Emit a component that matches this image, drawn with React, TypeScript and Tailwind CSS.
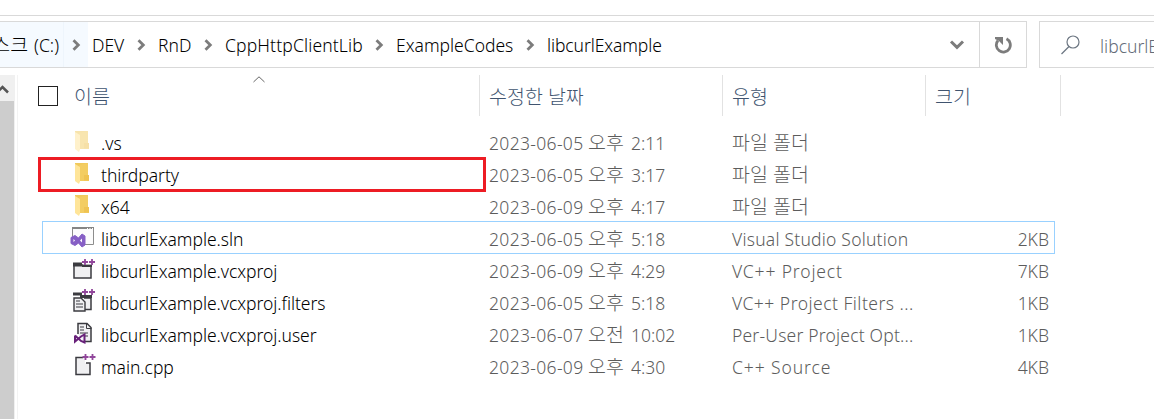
import type { ReactNode } from 'react';

const ink = '#3b3b40';
const plus = '#91479b';

function Plus({ x, y }: { x: number; y: number }) {
  return (
    <path d={`M${x} ${y}h6M${x + 3} ${y - 3}v6M${x + 7} ${y}h6M${x + 10} ${y - 3}v6`} stroke={plus} strokeWidth="1.8" fill="none" />
  );
}

function Icon({ children }: { children: ReactNode }) {
  return (
    <svg width="26" height="26" viewBox="0 0 26 26" className="shrink-0">
      {children}
    </svg>
  );
}

function Folder({ faded = false }: { faded?: boolean }) {
  return (
    <Icon>
      <g opacity={faded ? 0.5 : 1}>
        <path d="M5 2h13v12h1v6H8V2Z" fill="#f3cd62" />
        <path d="M5 2h13l-9 2v16H5Z" fill="#f0c95c" />
        <path d="M5 3l5 3v14.500l-1 2.500l-4-3Z" fill="#ffe599" />
        <path d="M14 14h5v5.500h-5Z" fill="#efc352" />
      </g>
    </Icon>
  );
}

function Solution() {
  return (
    <Icon>
      <path d="M2 3h21.500v17H2Z" fill="#fcfcfc" />
      <path d="M2.500 14V3.500H23.500V19.500H15" fill="none" stroke="#8d8d8d" />
      <path d="M2 3h22" stroke="#858585" strokeWidth="2" />
      <path d="M17 3.500h1M19.500 3.500h1M22 3.500h1" stroke="#fff" />
      <path
        d="M1 12.500L5 10.500L8.500 13L12 9L15 11V20L12 22L8.500 18L5 20.500L1 18.500Z"
        fill="#865fc5"
        stroke="#865fc5"
        strokeWidth="1"
        strokeLinejoin="round"
      />
      <path d="M3.500 14v3l1.500-1.500ZM12 13.500l-2 2l2 2Z" fill="#fff" />
    </Icon>
  );
}

function Project() {
  return (
    <Icon>
      <path d="M4 8h17v13H4Z" fill="#f0f0f2" stroke={ink} strokeWidth="1.500" />
      <path d="M3 5.500h9v4H3ZM12 8h10v2H12Z" fill={ink} />
      <path d="M13 0h13v7.500H13Z" fill="#fff" />
      <Plus x={12} y={5} />
    </Icon>
  );
}

function Filters() {
  return (
    <Icon>
      <path d="M3 3.500h9v3H3ZM10 6h12v3H10Z" fill={ink} />
      <path d="M14 9h7v11.500h-6" fill="#f0f0f2" stroke={ink} strokeWidth="1.500" />
      <path d="M4 9h7l4 4v9H4Z" fill="#f0f0f2" stroke={ink} strokeWidth="1.400" />
      <path d="M6 12h4M6 15h7M6 18h7" stroke={ink} strokeWidth="1.200" />
      <path d="M13 0h13v6H13Z" fill="#fff" />
      <Plus x={12} y={3} />
    </Icon>
  );
}

function UserOptions() {
  return (
    <Icon>
      <path d="M8 13V2.500h9l4 4V20.500h-7" fill="#f0f0f2" stroke={ink} strokeWidth="1.500" />
      <path d="M16.500 2.500v5h5M10 6h4M10 9h4M10 12h8M14 15h4" stroke={ink} strokeWidth="1" fill="none" />
      <path d="M5 14.500v6l6-5l3.500-2v8l-3.500-1.500L5 14.500" fill="none" stroke="#68217a" strokeWidth="2" />
    </Icon>
  );
}

function Source() {
  return (
    <Icon>
      <path d="M13 4.500H6V22h14V10h-5V4.500Z" fill="#f0f0f2" />
      <path d="M13 4.500H6V21.500h14V10h-4" fill="none" stroke={ink} strokeWidth="1.500" />
      <Plus x={12.5} y={4} />
    </Icon>
  );
}

const files = [
  { icon: <Folder faded />, name: '.vs', day: '2023-06-05', half: '오후', time: '2:11', type: '파일 폴더', tracking: 'text-[19.5px]', size: '' },
  { icon: <Folder />, name: 'thirdparty', day: '2023-06-05', half: '오후', time: '3:17', type: '파일 폴더', tracking: 'text-[19.5px]', size: '', marked: true },
  { icon: <Folder />, name: 'x64', day: '2023-06-09', half: '오후', time: '4:17', type: '파일 폴더', tracking: 'text-[19.5px]', size: '' },
  { icon: <Solution />, name: 'libcurlExample.sln', day: '2023-06-05', half: '오후', time: '5:18', type: 'Visual Studio Solution', tracking: 'tracking-[0.22px]', size: '2KB', focused: true },
  { icon: <Project />, name: 'libcurlExample.vcxproj', day: '2023-06-09', half: '오후', time: '4:29', type: 'VC++ Project', tracking: 'tracking-[0.85px]', size: '7KB' },
  { icon: <Filters />, name: 'libcurlExample.vcxproj.filters', day: '2023-06-05', half: '오후', time: '5:18', type: 'VC++ Project Filters ...', tracking: 'tracking-[0.48px]', size: '1KB' },
  { icon: <UserOptions />, name: 'libcurlExample.vcxproj.user', day: '2023-06-07', half: '오전', time: '10:02', type: 'Per-User Project Opt...', tracking: 'tracking-[0.2px]', size: '1KB' },
  { icon: <Source />, name: 'main.cpp', day: '2023-06-09', half: '오후', time: '4:30', type: 'C++ Source', tracking: 'tracking-[0.9px]', size: '4KB' },
];

const crumbs = [
  { label: 'DEV', box: 'w-[66px]', tracking: '' },
  { label: 'RnD', box: 'w-[67px]', tracking: '' },
  { label: 'CppHttpClientLib', box: 'w-[171px]', tracking: 'tracking-[0.14px]' },
  { label: 'ExampleCodes', box: 'w-[151px]', tracking: '' },
  { label: 'libcurlExample', box: 'w-[130px]', tracking: '-tracking-[0.1px]' },
];

function Chevron() {
  return (
    <svg width="9" height="12" viewBox="0 0 9 12" className="shrink-0">
      <path d="M1.500 1.200L6.300 6L1.500 10.800" fill="none" stroke="#7c7c7c" strokeWidth="2.800" />
    </svg>
  );
}

function AddressBar() {
  return (
    <div className="mt-[5px] flex h-[47px] text-black">
      <div className="flex w-[1027px] shrink-0 border border-l-0 border-[#d9d9d9]">
        <div className="flex w-[88px] shrink-0 items-center bg-[#f5faff]">
          <div className="flex h-full w-[64px] items-center justify-end border-r border-[#eef5fc] pr-[4px] whitespace-nowrap">
            <span className="text-[19.5px]">스크</span>
            <span className="ml-[6px]">(C:)</span>
          </div>
          <span className="ml-[8px] flex">
            <Chevron />
          </span>
        </div>
        <nav className="flex flex-1 items-center pl-[4px]">
          {crumbs.map((c, i) => (
            <div key={c.label} className={`flex shrink-0 items-center justify-between whitespace-nowrap ${c.box}`}>
              <span className={c.tracking}>{c.label}</span>
              {i < crumbs.length - 1 && (
                <span className="mr-[12px] flex">
                  <Chevron />
                </span>
              )}
            </div>
          ))}
        </nav>
        <div className="flex w-[30px] items-center">
          <svg width="16" height="12" viewBox="0 0 16 12">
            <path d="M2 2.500L8 8.300L14 2.500" fill="none" stroke="#7c7c7c" strokeWidth="3" />
          </svg>
        </div>
        <div className="flex w-[47px] items-center justify-center border-l border-[#d9d9d9]">
          <svg width="18" height="18" viewBox="0 0 18 18">
            <path d="M12.500 2.800A7 7 0 1 1 4 4.500" fill="none" stroke="#7c7c7c" strokeWidth="2.800" />
            <path d="M1 1h8v8L6.500 6.500L5 5L1 3Z" fill="#7c7c7c" />
          </svg>
        </div>
      </div>
      <div className="ml-[12px] flex min-w-0 flex-1 items-center border border-r-0 border-[#d9d9d9] pl-[21px] text-[#646c78]">
        <svg width="19" height="20" viewBox="0 0 19 20" className="shrink-0">
          <circle cx="12" cy="7" r="6" fill="none" stroke="#6c7682" strokeWidth="1.200" />
          <path d="M8 11.500L0.500 19" stroke="#6c7682" strokeWidth="1.300" />
        </svg>
        <span className="ml-[20px] pt-[3px] whitespace-nowrap">libcurlExample</span>
      </div>
    </div>
  );
}

function ColumnHeader() {
  return (
    <div className="relative flex h-[41px] w-[1043px] text-[19.5px] text-[#40546f]">
      <svg width="12" height="7" viewBox="0 0 12 7" className="absolute top-[1px] left-[235px]">
        <path d="M0.500 6L6 0.800L11.500 6" fill="none" stroke="#666" />
      </svg>
      <div className="flex w-[462px] items-center border-r border-[#e2e2e2] pl-[20px]">
        <span className="h-[20px] w-[20px] border border-[#222]" />
        <span className="ml-[16px] pt-[2px]">이름</span>
      </div>
      <div className="flex w-[243px] items-center border-r border-[#e2e2e2] pt-[2px] pl-[9px]">수정한 날짜</div>
      <div className="flex w-[203px] items-center border-r border-[#e2e2e2] pt-[2px] pl-[9px]">유형</div>
      <div className="flex w-[135px] items-center border-r border-[#e2e2e2] pt-[2px] pl-[9px]">크기</div>
    </div>
  );
}

export default function App() {
  return (
    <div className="flex h-[419px] w-[1154px] flex-col overflow-hidden bg-white font-['Noto_Sans','Noto_Sans_CJK_KR',sans-serif] text-[17.5px] leading-[24px] font-light">
      <div className="h-[16px] shrink-0 border-b border-[#d9d9d9]" />
      <AddressBar />
      <div className="mt-[7px] flex flex-1">
        <div className="flex w-[15px] shrink-0 flex-col bg-[#f0f0f0]">
          <div className="h-[26px]">
            <svg width="10" height="26" viewBox="0 0 10 26">
              <path d="M-3 17.500L2.500 12L8 17.500" fill="none" stroke="#555" strokeWidth="2.500" />
            </svg>
          </div>
          <div className="w-[14px] flex-1 bg-[#cdcdcd]" />
        </div>
        <div className="ml-[2px] flex flex-1 flex-col border-l border-[#f3f3f3]">
          <ColumnHeader />
          <div className="mt-[10px] ml-[24px] w-[1013px]">
            {files.map((f) => (
              <div key={f.name} className="relative flex h-[32px] items-center text-[#5c5c5c]">
                {f.focused && <div className="absolute -top-[1px] left-0 h-[33px] w-[1013px] border border-[#99d1ff]" />}
                {f.marked && <div className="absolute -top-[1px] -left-[4px] h-[35px] w-[448px] border-[3px] border-[#ed1c24]" />}
                <div className="flex w-[447px] items-center pl-[28px]">
                  {f.icon}
                  <span className="ml-[5px] pt-px tracking-[-0.04px] whitespace-nowrap text-black">{f.name}</span>
                </div>
                <div className="flex w-[243px] items-baseline pt-px whitespace-nowrap">
                  <span className="w-[99px] tracking-[0.33px]">{f.day}</span>
                  <span className="w-[43px] text-[19.5px]">{f.half}</span>
                  <span>{f.time}</span>
                </div>
                <div className={`w-[203px] pt-px whitespace-nowrap ${f.tracking}`}>{f.type}</div>
                <div className="flex-1 pt-px pr-[6px] text-right">{f.size}</div>
              </div>
            ))}
          </div>
        </div>
      </div>
    </div>
  );
}
